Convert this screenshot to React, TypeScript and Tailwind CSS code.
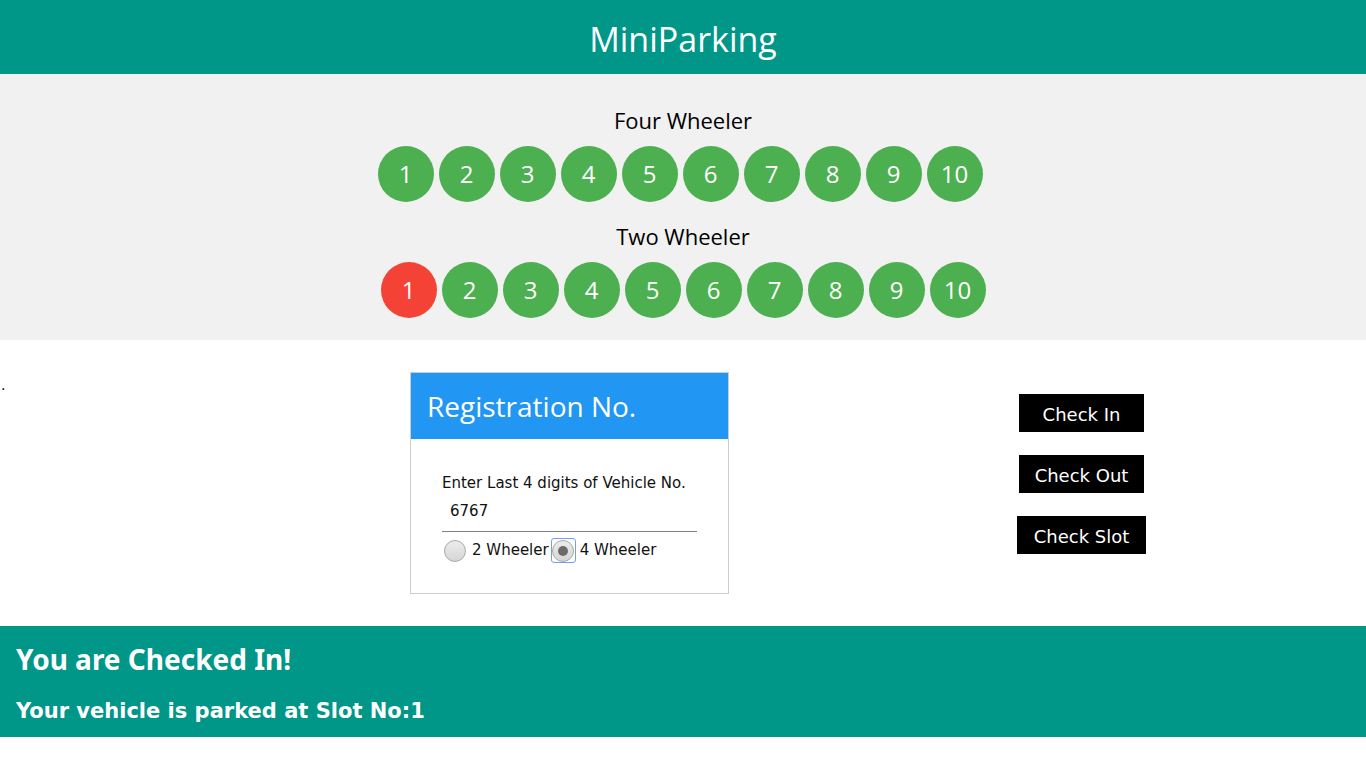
import React from "react";

const seg = { fontFamily: '"Open Sans", "Noto Sans", sans-serif' };
const ver = { fontFamily: '"DejaVu Sans", Verdana, sans-serif' };

function Circle({ n, red }: { n: number; red?: boolean }) {
  return (
    <div
      className={`w-[56px] h-[56px] rounded-full flex items-center justify-center text-white text-[24px] ${red ? "bg-[#f44336]" : "bg-[#4caf50]"}`}
      style={seg}
    >
      {n}
    </div>
  );
}

function Radio({ checked }: { checked?: boolean }) {
  return (
    <span
      className={`inline-flex items-center justify-center w-[25px] h-[25px] rounded-[3px] ${checked ? "border border-[#6fa0f5]" : "border border-transparent"}`}
    >
      <span className="w-[22px] h-[22px] rounded-full border border-[#a9a9a9] bg-gradient-to-b from-[#ececec] to-[#d6d6d6] flex items-center justify-center">
        {checked && <span className="w-[10px] h-[10px] rounded-full bg-[#6b6b6b]" />}
      </span>
    </span>
  );
}

export default function App() {
  const nums = [1, 2, 3, 4, 5, 6, 7, 8, 9, 10];
  return (
    <div className="w-[1366px] min-h-[768px] bg-white">
      <div className="h-[74px] bg-[#009688] flex items-center justify-center text-white text-[34px] pt-[4px]" style={seg}>
        MiniParking
      </div>
      <div className="h-[266px] bg-[#f1f1f1] flex flex-col items-center pt-[30px]" style={seg}>
        <div className="text-[22px] text-black leading-[32px]">Four Wheeler</div>
        <div className="flex gap-[5px] mt-[10px] mr-[6px]">
          {nums.map((n) => (
            <Circle key={n} n={n} />
          ))}
        </div>
        <div className="text-[22px] text-black leading-[32px] mt-[18px]">Two Wheeler</div>
        <div className="flex gap-[5px] mt-[10px]">
          {nums.map((n) => (
            <Circle key={n} n={n} red={n === 1} />
          ))}
        </div>
      </div>
      <div className="flex pt-[32px] h-[286px]">
        <div className="w-[410px] text-[14px] leading-none pl-[1px] pt-[6px]" style={ver}>.</div>
        <div className="w-[319px] h-[222px] border border-[#cccccc] flex flex-col">
          <div className="h-[66px] bg-[#2196f3] text-white text-[28px] flex items-center pl-[16px]" style={seg}>
            Registration No.
          </div>
          <div className="pl-[31px] pr-[31px] pt-[35px]" style={ver}>
            <div className="text-[15px] text-[#111] leading-[18px]">Enter Last 4 digits of Vehicle No.</div>
            <div className="h-[40px] border-b border-[#808080] text-[15px] text-[#111] pl-[8px] pt-[10px] leading-[18px]">6767</div>
            <div className="flex items-center text-[15px] text-[#111] mt-[6px]">
              <Radio />
              <span className="ml-[5px] mr-[2px]">2 Wheeler</span>
              <Radio checked />
              <span className="ml-[4px]">4 Wheeler</span>
            </div>
          </div>
        </div>
        <div className="ml-[288px] w-[129px] flex flex-col items-center pt-[22px] gap-[23px]" style={ver}>
          <div className="w-[125px] h-[38px] bg-black text-white text-[18px] flex items-center justify-center pt-[2px]">Check In</div>
          <div className="w-[125px] h-[38px] bg-black text-white text-[18px] flex items-center justify-center pt-[2px]">Check Out</div>
          <div className="w-[129px] h-[38px] bg-black text-white text-[18px] flex items-center justify-center pt-[2px]">Check Slot</div>
        </div>
      </div>
      <div className="h-[111px] bg-[#009688] text-white px-[16px] pt-[16px]">
        <div className="text-[28px] font-bold leading-[34px]" style={{ fontFamily: '"Noto Sans", sans-serif' }}>
          You are Checked In!
        </div>
        <div className="text-[21px] font-bold leading-[30px] mt-[20px]" style={{ fontFamily: '"DejaVu Sans", sans-serif' }}>
          Your vehicle is parked at Slot No:1
        </div>
      </div>
    </div>
  );
}
